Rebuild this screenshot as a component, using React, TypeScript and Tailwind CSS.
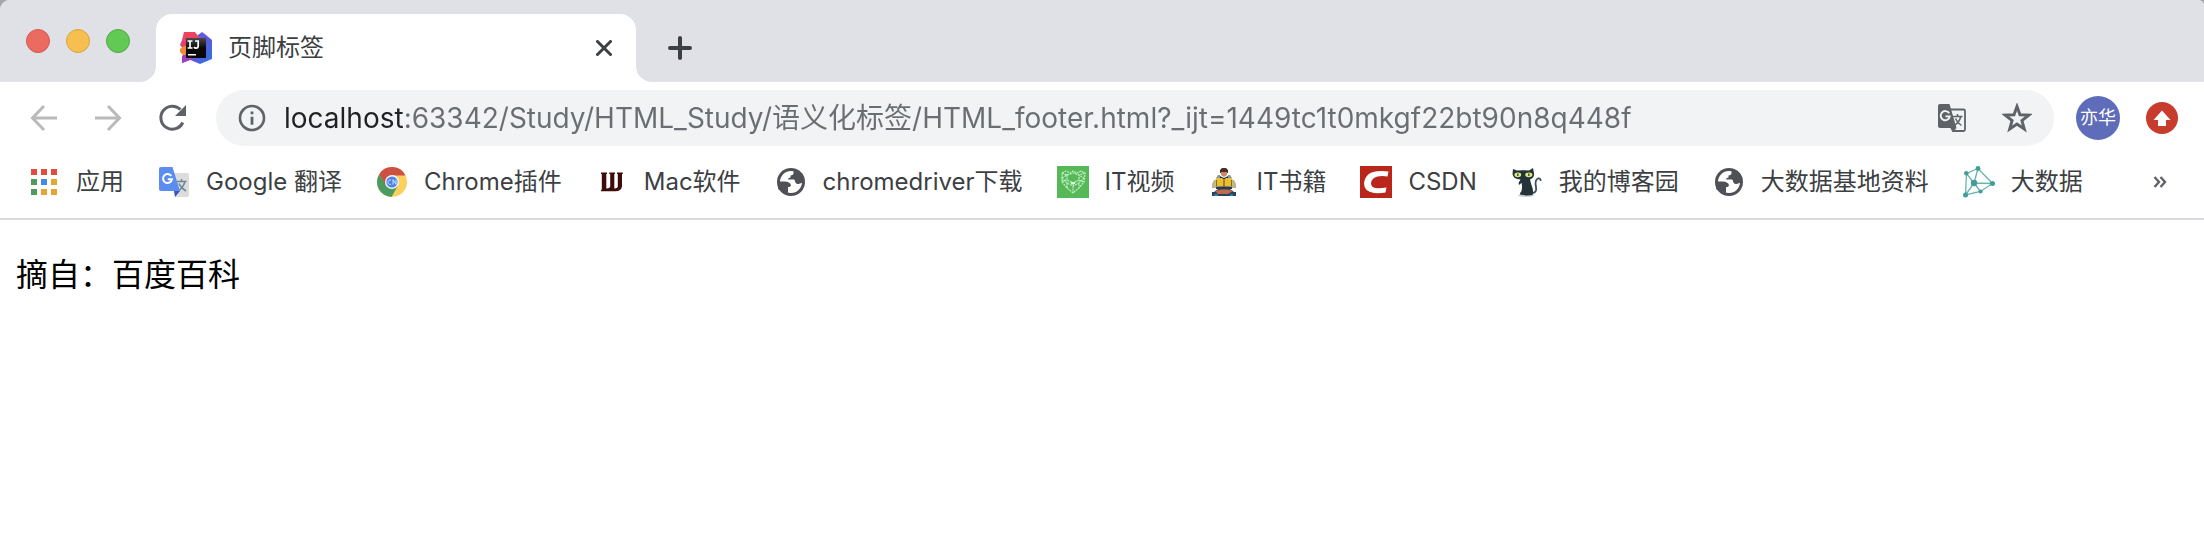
import type { ReactNode } from "react";

function IntelliJIcon() {
  return (
    <svg viewBox="0 0 32 32" className="size-8 shrink-0" aria-hidden="true">
      <defs>
        <linearGradient id="ij-red" x1="0" y1="0" x2="0" y2="1">
          <stop offset="0" stopColor="#f0445c" />
          <stop offset="0.4" stopColor="#e83f70" />
          <stop offset="1" stopColor="#8a3fd0" />
        </linearGradient>
        <linearGradient id="ij-blue" x1="0" y1="0" x2="1" y2="1">
          <stop offset="0" stopColor="#3f6ff0" />
          <stop offset="0.45" stopColor="#6a55d8" />
          <stop offset="0.8" stopColor="#3b6ae0" />
          <stop offset="1" stopColor="#3e7be8" />
        </linearGradient>
        <linearGradient id="ij-box" x1="0" y1="0" x2="0" y2="1">
          <stop offset="0" stopColor="#4a4a4a" />
          <stop offset="0.5" stopColor="#080808" />
        </linearGradient>
      </defs>
      <path d="M18 3 22 0 26 3 32 8V27L20 32 8 27Z" fill="url(#ij-blue)" />
      <path d="M4 0H15L19 5V12L12 27 2 31V24L6 20 0 13 2 8Z" fill="url(#ij-red)" />
      <path d="M0 17 4 14H8V23H3L0 20Z" fill="#ee8a35" />
      <path d="M2 25 8 22 13 27 2 31Z" fill="#a13fc4" />
      <rect x="6" y="6" width="20" height="20" fill="url(#ij-box)" />
      <path
        d="M7.500 9H12.500M10 9V16M7.500 16H12.500M15 9H19M18.200 9V13.800Q18.200 16.200 16 16.200 14.800 16.200 13.800 15.200"
        fill="none"
        stroke="#fff"
        strokeWidth="1.700"
      />
      <rect x="8" y="22" width="8" height="1.500" fill="#fff" />
    </svg>
  );
}

function BackIcon() {
  return (
    <svg viewBox="0 0 32 32" className="size-8" fill="none" stroke="currentColor" strokeWidth="3" aria-hidden="true">
      <path d="M29 16H5M16 4 4.500 16 16 28" />
    </svg>
  );
}

function ForwardIcon() {
  return (
    <svg viewBox="0 0 32 32" className="size-8" fill="none" stroke="currentColor" strokeWidth="3" aria-hidden="true">
      <path d="M3 16H27M16 4 27.500 16 16 28" />
    </svg>
  );
}

function ReloadIcon() {
  return (
    <svg viewBox="0 0 32 32" className="size-8" aria-hidden="true">
      <path
        d="M24.500 7.500A11.500 11.500 0 1 0 26.800 20.500"
        fill="none"
        stroke="currentColor"
        strokeWidth="3"
      />
      <path d="M30 3V14H19Z" fill="currentColor" />
    </svg>
  );
}

function InfoIcon() {
  return (
    <svg viewBox="0 0 28 28" className="size-7 shrink-0 text-[#5f6368]" aria-hidden="true">
      <circle cx="14" cy="14" r="12" fill="none" stroke="currentColor" strokeWidth="2.600" />
      <path d="M12.600 7.500H15.400V10.300H12.600ZM12.600 12.700H15.400V20.700H12.600Z" fill="currentColor" />
    </svg>
  );
}

function PageTranslateIcon() {
  return (
    <svg viewBox="0 0 28 28" className="size-7" aria-hidden="true">
      <path d="M12 5.500H25.500Q27 5.500 27 7V25.500Q27 27 25.500 27H15L13 23" fill="none" stroke="#5f6368" strokeWidth="1.800" />
      <path d="M2 0H11.500L18.500 24 15 28 13 24H2Q0 24 0 22V2Q0 0 2 0Z" fill="#5f6368" />
      <path d="M11.200 9.300A4.600 4.600 0 1 0 11.800 12.400H7.500" fill="none" stroke="#f1f3f4" strokeWidth="1.900" />
      <path d="M15 12.500H24.500M19.500 10V12.500M22.800 12.500Q21.500 18 16.500 21.500M17.500 14.500Q19 18.500 23.500 21.500" fill="none" stroke="#5f6368" strokeWidth="1.500" />
    </svg>
  );
}

function StarIcon() {
  return (
    <svg viewBox="0 0 30 30" className="size-[30px]" aria-hidden="true">
      <path
        d="M15 3.500 18 11.800 26.800 12.100 19.900 17.500 22.300 26 15 21.100 7.700 26 10.100 17.500 3.200 12.100 12 11.800Z"
        fill="none"
        stroke="#5f6368"
        strokeWidth="2.900"
      />
    </svg>
  );
}

function UpdateIcon() {
  return (
    <svg viewBox="0 0 32 32" className="size-8" aria-hidden="true">
      <circle cx="16" cy="16" r="16" fill="#c83c2d" />
      <path d="M16 8.500 24.500 18H20V24H12V18H7.500Z" fill="#fff" />
    </svg>
  );
}

function AppsIcon() {
  return (
    <svg viewBox="0 0 32 32" className="size-8" aria-hidden="true">
      <path d="M3 3H9V9H3ZM13 3H19V9H13ZM23 3H29V9H23Z" fill="#e44a3e" />
      <path d="M3 13H9V19H3ZM3 23H9V29H3Z" fill="#519a5d" />
      <path d="M13 13H19V19H13Z" fill="#438af0" />
      <path d="M23 13H29V19H23ZM13 23H19V29H13ZM23 23H29V29H23Z" fill="#e5a436" />
    </svg>
  );
}

function GoogleTranslateIcon() {
  return (
    <svg viewBox="0 0 32 32" className="size-8" aria-hidden="true">
      <path d="M14 7H29Q31 7 31 9V29Q31 31 29 31H17Z" fill="#dcdcdc" />
      <path d="M19 15.500H28.500M23.500 13V15.500M27 15.500Q25.500 21 20 25.500M21 17.500Q23 22 28 25" fill="none" stroke="#6d8796" strokeWidth="1.500" />
      <path d="M16 25H22L17 31Z" fill="#3754bd" />
      <path d="M3 1H14.500L22 25H3Q1 25 1 23V3Q1 1 3 1Z" fill="#5b8df0" />
      <path d="M13.300 10A4.500 4.500 0 1 0 14 13.200H9.800" fill="none" stroke="#fff" strokeWidth="2" />
    </svg>
  );
}

function ChromeIcon() {
  return (
    <svg viewBox="0 0 32 32" className="size-8" aria-hidden="true">
      <circle cx="16" cy="16" r="15" fill="#fbd05c" />
      <path d="M3.200 8.200A15 15 0 0 1 29.500 9.500H16L9.500 20Z" fill="#cd5142" />
      <path d="M3.200 8.200A15 15 0 0 0 15.500 31L22 19.500 10 19.500Z" fill="#4b9b5e" />
      <circle cx="16" cy="16" r="7" fill="#f3f5f8" />
      <circle cx="16" cy="16" r="5.600" fill="#4b84e6" />
      <path d="M15 14A2.300 2.300 0 1 0 15 18.300M17 18.500V13.700L20 18.300V13.500" fill="none" stroke="#cfe0fb" strokeWidth="1" />
    </svg>
  );
}

function WIcon() {
  return (
    <svg viewBox="0 0 32 32" className="size-8" aria-hidden="true">
      <path
        d="M5 6.500H11V8H10.300V22.500Q12.500 22.500 14.200 21V8H13.300V6.500H19V8H18.300V22.500Q20.500 22.500 21.800 21V8H21V6.500H26.800V8H26V20.500Q25 25.300 19.500 25.300H5V23.700H5.800V8H5Z"
        fill="#3d0d0c"
      />
    </svg>
  );
}

function GlobeIcon() {
  return (
    <svg viewBox="0 0 32 32" className="size-8" aria-hidden="true">
      <circle cx="16" cy="16" r="14" fill="#505157" />
      <circle cx="16" cy="16" r="11" fill="#fff" />
      <path
        d="M18.500 4V7.500Q18 9.500 15.500 9.500V11.500Q13 11.500 13 13.500H19Q20 13.500 20.200 16 21 18.500 23.500 18L28 16.500 27.500 8 22 4Z"
        fill="#505157"
      />
      <path d="M4 15.500H9.500Q15.500 15.800 16 19.500 15.500 21.300 13 21.300V26.500L11 28 3 23Z" fill="#505157" />
    </svg>
  );
}

function VideoIcon() {
  return (
    <svg viewBox="0 0 32 32" className="size-8" aria-hidden="true">
      <rect width="32" height="32" fill="#56b856" />
      <path
        d="M5 7 9 5 13 7 16 5 20 7 24 5 28 7 27 16 22 22 16 27 10 22 5 16ZM5 7 10 9 16 7 22 9 28 7M5 12 10 9V14L16 17 22 14V9L27 12M5 16 10 14M22 14 27 16M10 22V17L16 20 22 17V22M16 17V27M10 17 5 12M22 17 27 12"
        fill="none"
        stroke="#b9efc0"
        strokeWidth="1.300"
        strokeDasharray="2 0.800"
      />
      <path d="M14 16H18V18H14Z" fill="#e2fbe2" />
    </svg>
  );
}

function ReaderIcon() {
  return (
    <svg viewBox="0 0 32 32" className="size-8" aria-hidden="true">
      <path d="M14 2H18L20 4V7H12V4Z" fill="#4d2b26" />
      <path d="M13 6H19V9L16 11 13 9Z" fill="#c98a68" />
      <path d="M10 9H12V12H8ZM20 9H22L24 12H20Z" fill="#8b979c" />
      <path d="M6 14H8V22H4V18ZM24 14H26L28 18V22H24Z" fill="#a9b4b8" />
      <path d="M12 10 16 12 20 10V13H12Z" fill="#28384a" />
      <path d="M8 12 14 12 16 14 18 12 24 12 26 20 17 21H15L6 20Z" fill="#e9bd30" />
      <path d="M15.300 13H16.700V21H15.300ZM8 14H9V20H8ZM23 14H24V20H23Z" fill="#8b6a22" />
      <path d="M8 20.500H24V23H8Z" fill="#2c3b4b" />
      <path d="M4 26H6L10 23H22L26 26H28V30H4Z" fill="#29435a" />
      <path d="M7 25 13 23.500H20L25 25 20 28H10Z" fill="#c06b50" />
      <path d="M6 28H10V30H6ZM22 28H25V30H22Z" fill="#2878ad" />
    </svg>
  );
}

function CsdnIcon() {
  return (
    <svg viewBox="0 0 32 32" className="size-8" aria-hidden="true">
      <rect width="32" height="32" fill="#bb261b" />
      <path
        d="M28.500 5.500 27.500 10.500Q22 9.500 17.500 10.500 11.500 12 11 17 10.800 22 17 22.300 21.500 22.500 26.500 21.500L25.500 26.500Q20 27.500 14 27 4 25.500 4 17.500 5 6.500 17 5.200 23 4.500 28.500 5.500Z"
        fill="#fff"
      />
    </svg>
  );
}

function CatIcon() {
  return (
    <svg viewBox="0 0 32 32" className="size-8" aria-hidden="true">
      <path d="M21 27Q26 27 25 21 23.500 14 27 12.500 30 12 29.500 15" fill="none" stroke="#3e5058" strokeWidth="1.800" />
      <ellipse cx="15" cy="29.500" rx="8" ry="1.300" fill="#c4c9cb" />
      <path
        d="M2 3 6 4.500Q12 4 18 4.500L22 2 23 7.500Q23.500 12 19 13.500 20 18 21.500 22 22.500 26 21.500 29 15 30 9 28.500 8.500 27.500 10.500 25 11.500 20 10.500 17L8 19 7.500 17 9.500 13.500Q2 13 1.500 8Z"
        fill="#24333a"
      />
      <ellipse cx="6.800" cy="8.800" rx="3.400" ry="2.400" fill="#dbe87e" />
      <ellipse cx="17.800" cy="8.800" rx="3.600" ry="2.400" fill="#dbe87e" />
      <path d="M6.200 7.500H7.400V10H6.200ZM17.200 7.500H18.400V10H17.200Z" fill="#24333a" />
    </svg>
  );
}

function NetworkIcon() {
  return (
    <svg viewBox="0 0 32 32" className="size-8" aria-hidden="true">
      <path
        d="M3.500 7.500 15 2.500 29.500 17.500 17.500 25.500 2.500 29ZM3.500 7.500 11 17 15 2.500M29.500 17.500 11 17 17.500 25.500M11 17 2.500 29"
        fill="none"
        stroke="#6ab4ae"
        strokeWidth="1.300"
      />
      <g fill="#409e97">
        <circle cx="3.300" cy="7.300" r="2.200" />
        <circle cx="15" cy="2.500" r="2.400" />
        <circle cx="29.500" cy="17.500" r="2.500" />
        <circle cx="17.500" cy="25.500" r="2.100" />
        <circle cx="2.500" cy="29" r="2.500" />
        <circle cx="11" cy="17" r="3.200" />
      </g>
    </svg>
  );
}

const bookmarks: { label: string; icon: ReactNode }[] = [
  { label: "应用", icon: <AppsIcon /> },
  { label: "Google 翻译", icon: <GoogleTranslateIcon /> },
  { label: "Chrome插件", icon: <ChromeIcon /> },
  { label: "Mac软件", icon: <WIcon /> },
  { label: "chromedriver下载", icon: <GlobeIcon /> },
  { label: "IT视频", icon: <VideoIcon /> },
  { label: "IT书籍", icon: <ReaderIcon /> },
  { label: "CSDN", icon: <CsdnIcon /> },
  { label: "我的博客园", icon: <CatIcon /> },
  { label: "大数据基地资料", icon: <GlobeIcon /> },
  { label: "大数据", icon: <NetworkIcon /> },
];

function TabStrip() {
  return (
    <header className="bg-[#dfe1e6] pt-3.5">
      <div className="flex h-[68px] bg-white">
        <div className="flex items-center gap-4 rounded-br-2xl bg-[#dfe1e6] px-[26px] pb-3.5">
          <button aria-label="关闭窗口" className="size-6 rounded-full border border-[#d1594f] bg-[#ec6b60]" />
          <button aria-label="最小化" className="size-6 rounded-full border border-[#d9a441] bg-[#f6bf50]" />
          <button aria-label="全屏" className="size-6 rounded-full border border-[#50a842] bg-[#62c955]" />
        </div>
        <div className="w-[480px] bg-[linear-gradient(to_bottom,#dfe1e6_50%,#ffffff_50%)]">
          <div className="flex h-full items-center gap-4 rounded-t-2xl bg-white px-6">
            <IntelliJIcon />
            <span className="flex-1 text-2xl text-[#3c4043]">页脚标签</span>
            <button aria-label="关闭标签页" className="text-[#3c4043]">
              <svg viewBox="0 0 16 16" className="size-4" fill="none" stroke="currentColor" strokeWidth="3" strokeLinecap="round" aria-hidden="true">
                <path d="M1.500 1.500 14.500 14.500M14.500 1.500 1.500 14.500" />
              </svg>
            </button>
          </div>
        </div>
        <div className="flex flex-1 items-center rounded-bl-2xl bg-[#dfe1e6] px-8">
          <button aria-label="新标签页" className="text-[#3c4043]">
            <svg viewBox="0 0 24 24" className="size-6" fill="none" stroke="currentColor" strokeWidth="4" strokeLinecap="round" aria-hidden="true">
              <path d="M12 2V22M2 12H22" />
            </svg>
          </button>
        </div>
      </div>
    </header>
  );
}

function Toolbar() {
  return (
    <div className="flex items-center gap-7 pt-2 pr-[26px] pl-7">
      <nav className="flex items-center gap-8">
        <button aria-label="后退" className="text-[#bababb]">
          <BackIcon />
        </button>
        <button aria-label="前进" className="text-[#bababb]">
          <ForwardIcon />
        </button>
        <button aria-label="重新加载" className="text-[#5f6368]">
          <ReloadIcon />
        </button>
      </nav>
      <div className="flex h-14 flex-1 items-center gap-[18px] rounded-full bg-[#f1f3f4] px-[22px]">
        <InfoIcon />
        <input
          aria-label="地址栏"
          defaultValue="localhost:63342/Study/HTML_Study/语义化标签/HTML_footer.html?_ijt=1449tc1t0mkgf22bt90n8q448f"
          spellCheck={false}
          className="h-10 min-w-0 flex-1 bg-[linear-gradient(to_right,#202124_120px,#6a6d71_120px)] bg-clip-text text-[28px] text-transparent outline-none"
        />
        <div className="flex items-center gap-9">
          <button aria-label="翻译此页">
            <PageTranslateIcon />
          </button>
          <button aria-label="为此页添加书签">
            <StarIcon />
          </button>
        </div>
      </div>
      <div className="-ml-1.5 flex items-center gap-[26px]">
        <button className="flex size-11 items-center justify-center rounded-full bg-[#5f6cba] text-lg text-white">亦华</button>
        <button aria-label="更新">
          <UpdateIcon />
        </button>
      </div>
    </div>
  );
}

function BookmarksBar() {
  return (
    <nav className="flex h-[74px] items-center justify-between border-b-2 border-[#d9dadf] pr-9 pl-7">
      <ul className="flex items-center gap-[34px]">
        {bookmarks.map((item) => (
          <li key={item.label}>
            <a href="#" className="flex items-center gap-4 text-2xl whitespace-nowrap text-[#3c4043]">
              {item.icon}
              {item.label}
            </a>
          </li>
        ))}
      </ul>
      <button aria-label="更多书签" className="text-[#5f6368]">
        <svg viewBox="0 0 16 16" className="size-4" fill="none" stroke="currentColor" strokeWidth="2.400" aria-hidden="true">
          <path d="M2.500 3 7 8 2.500 13M8.500 3 13 8 8.500 13" />
        </svg>
      </button>
    </nav>
  );
}

export default function App() {
  return (
    <div className="bg-[#a5a7ab] font-['Inter','Noto_Sans_CJK_SC',sans-serif]">
      <div className="min-h-screen overflow-hidden rounded-tl-[10px] rounded-tr-md bg-white">
        <TabStrip />
        <Toolbar />
        <BookmarksBar />
        <footer className="px-4 pt-8">
          <p className="text-[32px] leading-[46px] text-black">摘自：百度百科</p>
        </footer>
      </div>
    </div>
  );
}
